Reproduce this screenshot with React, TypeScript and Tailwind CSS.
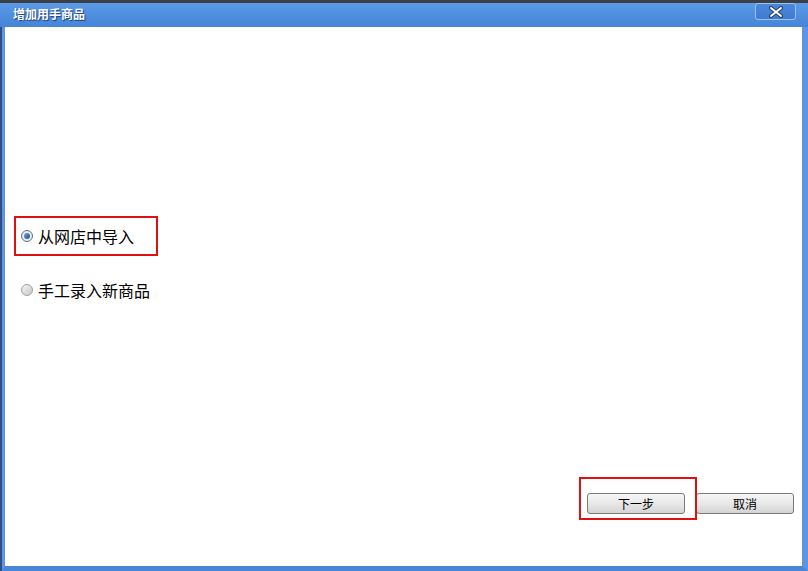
import React, { useState } from 'react';

const font = { fontFamily: '"SimSun", "Noto Sans CJK SC", sans-serif' };

const Radio = ({ checked }: { checked: boolean }) => (
  <span
    className={`inline-flex h-[12px] w-[12px] items-center justify-center rounded-full border ${
      checked ? 'border-[#5a6c80] bg-[#e8eef4]' : 'border-[#a0a0a0] bg-gradient-to-br from-[#f4f4f4] to-[#c8c8c8]'
    }`}
  >
    {checked && <span className="h-[6px] w-[6px] rounded-full bg-gradient-to-br from-[#6fa6d8] to-[#1b4f86]" />}
  </span>
);

const WinButton = ({ label }: { label: string }) => (
  <button className="h-[21px] w-[98px] rounded-[3px] border border-[#7a7a7a] bg-gradient-to-b from-[#f6f6f6] via-[#e8e8e8] to-[#d4d4d4] text-[12px] text-black">
    {label}
  </button>
);

export default function App() {
  const [mode, setMode] = useState('shop');

  return (
    <div className="flex h-[571px] w-[808px] flex-col bg-[#3f7bd0]" style={font}>
      <div className="h-[3px] bg-[#3b3f46]" />
      <div className="flex h-[24px] items-start justify-between bg-gradient-to-b from-[#5b9ae6] to-[#4584d8] pl-[13px] pr-[12px]">
        <span className="pt-[5px] text-[12px] font-bold leading-none text-white [text-shadow:1px_1px_1px_#1b3f7a]">
          增加用手商品
        </span>
        <div className="flex h-[17px] w-[41px] items-center justify-center rounded-[3px] border border-[#9cc3f0] bg-gradient-to-b from-[#4a88dc] to-[#3f7bd0]">
          <svg width="16" height="12" viewBox="0 0 16 12">
            <path d="M3 2 L13 10 M13 2 L3 10" stroke="#23405f" strokeWidth="4" strokeLinecap="round" />
            <path d="M3 2 L13 10 M13 2 L3 10" stroke="#ffffff" strokeWidth="2" strokeLinecap="round" />
          </svg>
        </div>
      </div>
      <div className="flex flex-1 border-l-[2px] border-[#2e4f86]">
        <div className="flex flex-1 flex-col border-l-[3px] border-r-[6px] border-b-[5px] border-l-[#5d95e2] border-r-[#5d95e2] border-b-[#4a86d8] bg-white">
          <div className="h-[189px]" />
          <div className="ml-[9px] flex h-[40px] w-[144px] items-center border-2 border-[#e01010] pl-[5px]">
            <label className="flex cursor-pointer items-center gap-[5px]" onClick={() => setMode('shop')}>
              <Radio checked={mode === 'shop'} />
              <span className="text-[16px] text-black">从网店中导入</span>
            </label>
          </div>
          <div className="ml-[16px] mt-[22px] flex h-[24px] items-center">
            <label className="flex cursor-pointer items-center gap-[5px]" onClick={() => setMode('manual')}>
              <Radio checked={mode === 'manual'} />
              <span className="text-[16px] text-black">手工录入新商品</span>
            </label>
          </div>
          <div className="flex-1" />
          <div className="mb-[46px] flex items-end justify-end pr-[8px]">
            <div className="relative z-10 flex h-[43px] w-[118px] items-end border-2 border-[#e01010] pb-[4px] pl-[6px]">
              <WinButton label="下一步" />
            </div>
            <div className="-ml-[1px] pb-[6px]">
              <WinButton label="取消" />
            </div>
          </div>
        </div>
      </div>
    </div>
  );
}
